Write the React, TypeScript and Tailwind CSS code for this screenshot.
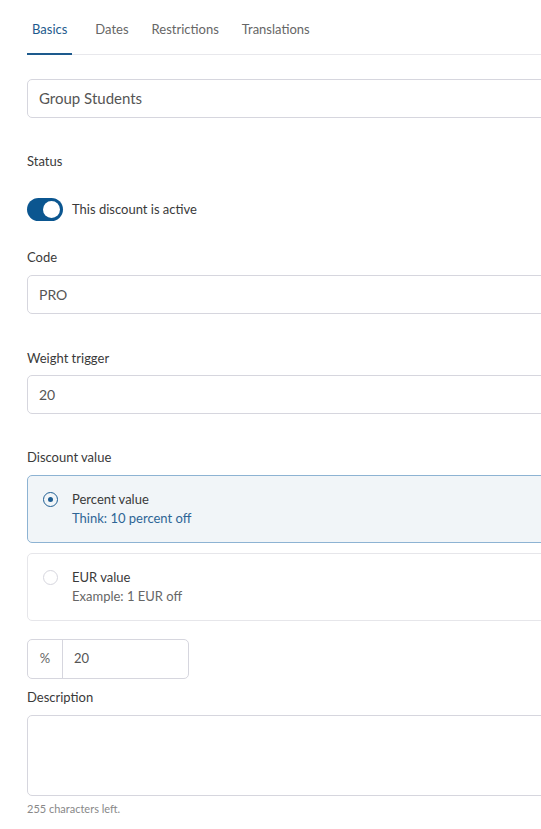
const tabs = ["Basics", "Dates", "Restrictions", "Translations"];

const Label = ({ children }: { children: React.ReactNode }) => (
  <div className="text-[13px] leading-[18px] text-[#3a3a3a]">{children}</div>
);

const TextInput = ({ value, large }: { value: string; large?: boolean }) => (
  <div className="flex h-[39px] items-center rounded-[5px] border border-[#d6d6de] bg-white px-[11px]">
    <span className={large ? "text-[15px] text-[#555]" : "text-[14px] text-[#555]"}>{value}</span>
  </div>
);

const OptionCard = ({
  title,
  hint,
  selected,
}: {
  title: string;
  hint: string;
  selected?: boolean;
}) => (
  <div
    className={
      selected
        ? "flex h-[68px] gap-[14px] rounded-[5px] border border-[#8db3d3] bg-[#f1f5f8] px-[15px] pt-[14px]"
        : "flex h-[68px] gap-[14px] rounded-[5px] border border-[#e6e6ea] bg-white px-[15px] pt-[14px]"
    }
  >
    <div className="pt-[2px]">
      {selected ? (
        <div className="flex h-[15px] w-[15px] items-center justify-center rounded-full border-[1.5px] border-[#1f5e93]">
          <div className="h-[5px] w-[5px] rounded-full bg-[#1f5e93]" />
        </div>
      ) : (
        <div className="h-[15px] w-[15px] rounded-full border border-[#d6d6de]" />
      )}
    </div>
    <div className="flex flex-col">
      <span className="text-[13px] leading-[19px] text-[#3a3a3a]">{title}</span>
      <span className={selected ? "text-[13px] leading-[18px] text-[#2e6596]" : "text-[13px] leading-[18px] text-[#666]"}>
        {hint}
      </span>
    </div>
  </div>
);

export default function App() {
  return (
    <div className="w-full overflow-hidden bg-white" style={{ fontFamily: "Lato, 'Noto Sans', sans-serif" }}>
      <div className="w-[600px] pl-[27px]">
        {/* tabs */}
        <div className="flex gap-[23px] border-b border-[#e8e8ec] pt-[19px]">
          {tabs.map((t, i) => (
            <div
              key={t}
              className={
                i === 0
                  ? "-mb-px border-b-2 border-[#1d5a8d] px-[5px] pb-[14px] text-[13px] leading-[20px] text-[#1d5a8d]"
                  : "pb-[15px] text-[13px] leading-[20px] text-[#666]"
              }
            >
              {t}
            </div>
          ))}
        </div>

        <div className="mt-[24px]">
          <TextInput value="Group Students" large />
        </div>

        <div className="mt-[34px]">
          <Label>Status</Label>
        </div>

        <div className="mt-[28px] flex items-center gap-[9px]">
          <div className="flex h-[23px] w-[36px] items-center justify-end rounded-full bg-[#0b5690] pr-[3px]">
            <div className="h-[17px] w-[17px] rounded-full bg-white" />
          </div>
          <span className="text-[13px] text-[#3a3a3a]">This discount is active</span>
        </div>

        <div className="mt-[27px]">
          <Label>Code</Label>
        </div>
        <div className="mt-[9px]">
          <TextInput value="PRO" />
        </div>

        <div className="mt-[35px]">
          <Label>Weight trigger</Label>
        </div>
        <div className="mt-[8px]">
          <TextInput value="20" />
        </div>

        <div className="mt-[34px]">
          <Label>Discount value</Label>
        </div>
        <div className="mt-[9px] flex flex-col gap-[10px]">
          <OptionCard title="Percent value" hint="Think: 10 percent off" selected />
          <OptionCard title="EUR value" hint="Example: 1 EUR off" />
        </div>

        <div className="mt-[18px] flex h-[40px] w-[162px] items-center rounded-[5px] border border-[#d6d6de]">
          <div className="flex h-full w-[35px] items-center justify-center border-r border-[#d6d6de] text-[13px] text-[#666]">
            %
          </div>
          <span className="pl-[11px] text-[13px] text-[#555]">20</span>
        </div>

        <div className="mt-[9px]">
          <Label>Description</Label>
        </div>
        <div className="mt-[9px] h-[81px] rounded-[5px] border border-[#d6d6de]" />
        <div className="mt-[5px] pb-[10px] text-[11px] text-[#888]">255 characters left.</div>
      </div>
    </div>
  );
}
